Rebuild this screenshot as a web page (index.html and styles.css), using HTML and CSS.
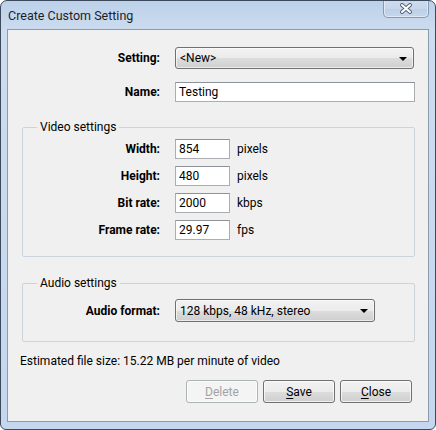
FILE: index.html
```html
<!DOCTYPE html>
<html>
<head>
<meta charset="utf-8">
<link rel="stylesheet" href="styles.css">
</head>
<body>
<div class="window">
  <div class="titlebar">
    <span class="title">Create Custom Setting</span>
    <div class="close-btn">
      <svg width="14" height="11" viewBox="0 0 14 11">
        <path d="M3 2 L11 9 M11 2 L3 9" stroke="#5a6575" stroke-width="4" stroke-linecap="round"/>
        <path d="M3 2 L11 9 M11 2 L3 9" stroke="#ffffff" stroke-width="2" stroke-linecap="round"/>
      </svg>
    </div>
  </div>
  <div class="client">
    <div class="row row-setting">
      <label class="lbl">Setting:</label>
      <div class="combo combo-setting"><span>&lt;New&gt;</span><i class="arrow"></i></div>
    </div>
    <div class="row row-name">
      <label class="lbl">Name:</label>
      <div class="field field-name">Testing</div>
    </div>

    <fieldset class="group group-video">
      <legend>Video settings</legend>
      <div class="grow">
        <label class="lbl lbl-in">Width:</label>
        <div class="field field-small">854</div>
        <span class="unit">pixels</span>
      </div>
      <div class="grow">
        <label class="lbl lbl-in">Height:</label>
        <div class="field field-small">480</div>
        <span class="unit">pixels</span>
      </div>
      <div class="grow">
        <label class="lbl lbl-in">Bit rate:</label>
        <div class="field field-small">2000</div>
        <span class="unit">kbps</span>
      </div>
      <div class="grow">
        <label class="lbl lbl-in">Frame rate:</label>
        <div class="field field-small">29.97</div>
        <span class="unit">fps</span>
      </div>
    </fieldset>

    <fieldset class="group group-audio">
      <legend>Audio settings</legend>
      <div class="grow">
        <label class="lbl lbl-in">Audio format:</label>
        <div class="combo combo-audio"><span>128 kbps, 48 kHz, stereo</span><i class="arrow"></i></div>
      </div>
    </fieldset>

    <p class="estimate">Estimated file size: 15.22 MB per minute of video</p>

    <div class="buttons">
      <div class="btn btn-disabled"><u>D</u>elete</div>
      <div class="btn"><u>S</u>ave</div>
      <div class="btn"><u>C</u>lose</div>
    </div>
  </div>
</div>
</body>
</html>
```

FILE: styles.css
```css
* { box-sizing: border-box; }
html, body {
  margin: 0;
  padding: 0;
  background: #ffffff;
}
body {
  font-family: Roboto, "Open Sans", sans-serif;
  font-size: 12px;
  color: #000;
}
.window {
  width: 436px;
  height: 430px;
  border: 1px solid #3c4a5c;
  border-radius: 7px 7px 6px 6px;
  background: linear-gradient(to bottom, #bcd1ea 0px, #cddcef 30px, #c4d7ee 100%);
  display: flex;
  flex-direction: column;
  overflow: hidden;
}
.titlebar {
  height: 28px;
  flex: none;
  display: flex;
  align-items: flex-start;
  justify-content: space-between;
  padding-left: 7px;
  padding-right: 6px;
}
.title {
  margin-top: 7px;
  font-size: 12.5px;
  color: #1e1e1e;
}
.close-btn {
  width: 46px;
  height: 18px;
  margin-top: -1px;
  border: 1px solid #8499b4;
  border-top: none;
  border-radius: 0 0 5px 5px;
  background: linear-gradient(to bottom, #cfdcee 0%, #c6d7ec 50%, #bccfe8 51%, #c6d7ec 100%);
  box-shadow: inset 0 0 0 1px rgba(255,255,255,0.45);
  display: flex;
  align-items: center;
  justify-content: center;
}
.client {
  flex: 1;
  margin: 0 6px 7px 6px;
  border: 1px solid #8a9bb0;
  background: #f0f0f0;
  padding: 17px 0 0 0;
  display: flex;
  flex-direction: column;
}
.row {
  display: flex;
  align-items: center;
  gap: 15px;
}
.row-name { margin-top: 13px; }
.lbl {
  width: 152px;
  text-align: right;
  font-weight: 700;
  flex: none;
}
.lbl-in { width: 137px; }
.combo {
  height: 22px;
  border: 1px solid #707070;
  border-radius: 3px;
  background: linear-gradient(to bottom, #f2f2f2 0%, #ebebeb 50%, #dddddd 51%, #cfcfcf 100%);
  box-shadow: inset 0 0 0 1px rgba(255,255,255,0.6);
  display: flex;
  align-items: center;
  justify-content: space-between;
  padding: 0 6px 0 4px;
  flex: none;
}
.combo-setting { width: 239px; }
.combo-audio { width: 200px; height: 23px; }
.arrow {
  width: 0;
  height: 0;
  border-left: 4px solid transparent;
  border-right: 4px solid transparent;
  border-top: 4px solid #000;
  margin-top: 1px;
}
.field {
  height: 20px;
  border: 1px solid #abadb3;
  border-top-color: #8e9399;
  background: #fff;
  padding: 0 3px;
  display: flex;
  align-items: center;
  flex: none;
}
.field-name { width: 240px; }
.field-small { width: 55px; }
.unit { margin-left: -8px; }
.group {
  margin: 0 13px 0 14px;
  padding: 0;
  border: 1px solid #c9d4de;
  border-radius: 2px;
  display: flex;
  flex-direction: column;
  min-width: 0;
}
.group legend {
  margin-left: 14px;
  padding: 0 3px;
  line-height: 16px;
}
.group-video {
  margin-top: 17px;
  padding-top: 4px;
  padding-bottom: 16px;
  gap: 7px;
}
.group-audio {
  margin-top: 18px;
  padding-top: 8px;
  padding-bottom: 19px;
}
.grow {
  display: flex;
  align-items: center;
  gap: 15px;
}
.estimate {
  margin: 11px 0 0 12px;
  line-height: 16px;
}
.buttons {
  display: flex;
  justify-content: flex-end;
  gap: 5px;
  margin-top: 11px;
  padding-right: 16px;
}
.btn {
  width: 72px;
  height: 23px;
  border: 1px solid #707070;
  border-radius: 3px;
  background: linear-gradient(to bottom, #f2f2f2 0%, #ebebeb 50%, #dddddd 51%, #cfcfcf 100%);
  box-shadow: inset 0 0 0 1px rgba(255,255,255,0.7);
  display: flex;
  align-items: center;
  justify-content: center;
  color: #000;
}
.btn u { text-underline-offset: 2px; }
.btn-disabled {
  border-color: #adb2b5;
  background: #f4f4f4;
  color: #a3a3a3;
}
```
